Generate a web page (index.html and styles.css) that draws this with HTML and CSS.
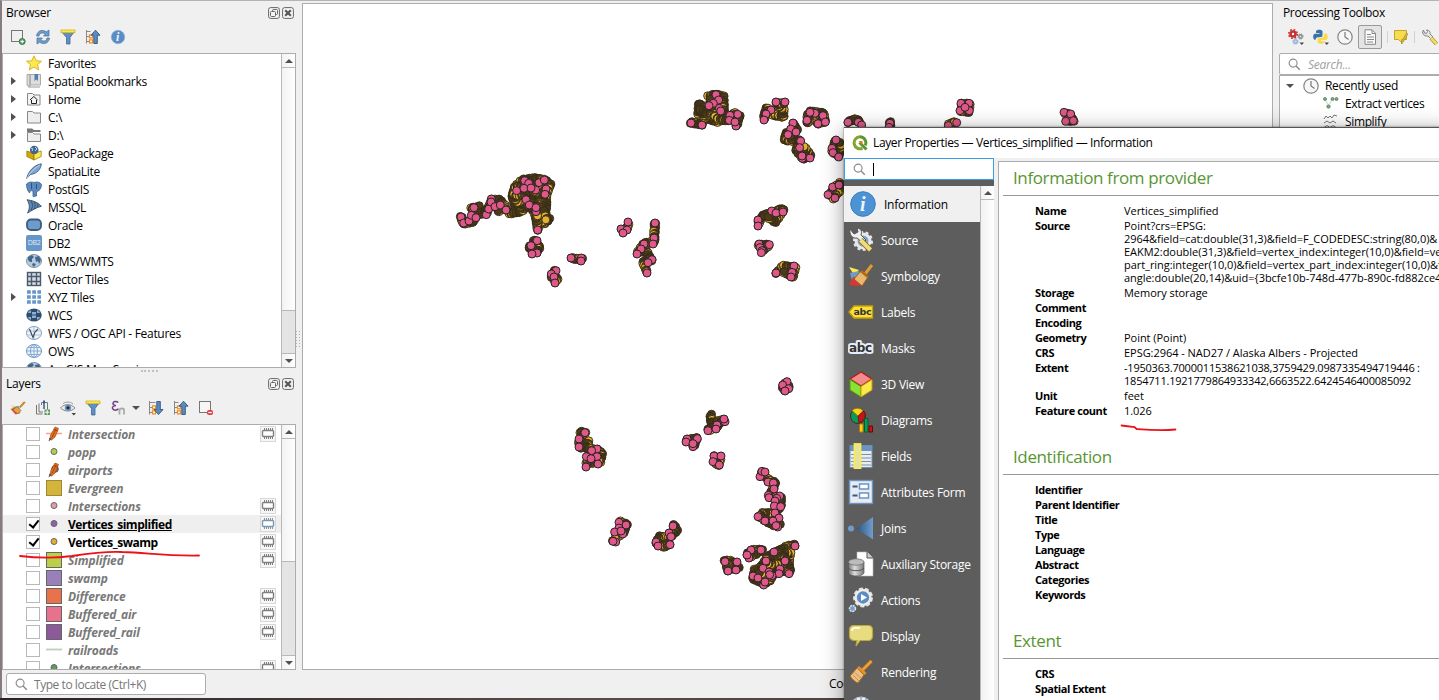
FILE: index.html
```html
<!DOCTYPE html>
<html lang="en">
<head>
<meta charset="utf-8">
<title>Layer Properties</title>
<link rel="stylesheet" href="styles.css">
</head>
<body>
<svg class="defs" width="0" height="0">
  <symbol id="float" viewBox="0 0 12 12"><rect x=".6" y=".6" width="10.8" height="10.8" rx="2" fill="#f4f4f4" stroke="#666"/><rect x="4.5" y="2.5" width="5" height="5" rx="1" fill="none" stroke="#666"/><rect x="2.5" y="4.5" width="5" height="5" rx="1" fill="#f4f4f4" stroke="#666"/></symbol>
  <symbol id="close" viewBox="0 0 12 12"><rect x=".6" y=".6" width="10.8" height="10.8" rx="2" fill="#f4f4f4" stroke="#666"/><path d="M3.2 3.2l5.6 5.6M8.8 3.2L3.2 8.8" stroke="#555" stroke-width="2.1"/></symbol>
  <symbol id="filter" viewBox="0 0 16 16"><path d="M1.5 2.5h13L10 8.5V15H6.500V8.500z" fill="#5f8fc4" stroke="#3d6a9c" stroke-width=".8"/><rect x="1" y="1" width="14" height="2.800" fill="#fce94f" stroke="#c4a000" stroke-width=".6"/></symbol>
  <symbol id="collapse" viewBox="0 0 16 16"><path d="M1.500 1v13.500M1.500 2.500h4M1.500 7.500h3M1.500 12.500h3" stroke="#888" fill="none"/><path d="M4.500 5.800h3v3h-3zM4.500 10.800h3v3h-3z" fill="#fff" stroke="#f08a1c" stroke-width="1.200"/><path d="M10.500 1.200l4.500 5h-2.700v8.300H8.800V6.200H6z" fill="#5a8cc0" stroke="#2f5580" stroke-width=".9"/></symbol>
  <symbol id="expand" viewBox="0 0 16 16"><path d="M1.500 1v13.500M1.500 2.500h6M1.500 7.500h3M1.500 12.500h3" stroke="#888" fill="none"/><path d="M4.500 5.800h3v3h-3zM4.500 10.800h3v3h-3z" fill="#fff" stroke="#f08a1c" stroke-width="1.200"/><path d="M10.500 14.500l4.500-5h-2.700V1.500H8.800v8H6z" fill="#5a8cc0" stroke="#2f5580" stroke-width=".9"/></symbol>
  <symbol id="chip" viewBox="0 0 16 16"><rect x=".5" y=".5" width="15" height="15" fill="#f6f6f6" stroke="#d8d8d8"/><rect x="2.500" y="4.500" width="11" height="6" rx="1" fill="#fff" stroke="currentColor" stroke-width="1.400"/><path d="M4.500 2v2.500M6.500 2v2.500M8.500 2v2.500M10.500 2v2.500M12.500 2v2.500M4.500 11v2M6.500 11v2M8.500 11v2M10.500 11v2M12.500 11v2" stroke="currentColor" stroke-width="1"/></symbol>
  <symbol id="lens" viewBox="0 0 14 14"><circle cx="5.500" cy="5.500" r="4.300" fill="none" stroke="#8a8a8a" stroke-width="1.200"/><path d="M8.700 8.700l4 4" stroke="#8a8a8a" stroke-width="1.600"/></symbol>
  <symbol id="clock" viewBox="0 0 16 16"><circle cx="8" cy="8" r="7.200" fill="#f7f7f7" stroke="#858585" stroke-width="1.200"/><path d="M8 3v5l3.500 2.500" fill="none" stroke="#777" stroke-width="1.200"/></symbol>
  <symbol id="pencil" viewBox="0 0 16 16"><path d="M9 1l3.500 1.500-3.500 8.500-3.500 3-1.500-1 .7-4z" fill="#e8721c" stroke="#a04a10" stroke-width=".7"/><path d="M8 3.500l4 1.500M10.200 2.500l-4.200 9" stroke="#8f3d10" stroke-width=".8"/><path d="M3.500 11.500l-1 4 3.500-2.500z" fill="#555"/></symbol>
  <symbol id="globe" viewBox="0 0 16 14"><ellipse cx="8" cy="7" rx="7.500" ry="6.500" fill="#e8f0f8" stroke="#6e97c2"/><ellipse cx="8" cy="7" rx="3.500" ry="6.500" fill="none" stroke="#7ba2cc"/><path d="M8 .5v13M.5 7h15M2 3.500h12M2 10.500h12" stroke="#7ba2cc" stroke-width=".8"/></symbol>
  <symbol id="earth" viewBox="0 0 16 14"><ellipse cx="8" cy="7" rx="7.500" ry="6.500" fill="#b7cbdf" stroke="#7d92a8"/><path d="M2 3l4-2 2 2-2 2v3L4 8 2 6zM9 3l4-1 2 4-2 4-1-3-2 1zM7 9l3 1-2 3-2-2z" fill="#42668c"/></symbol>
  <linearGradient id="joinfade"><stop offset="0" stop-color="#2c5580"/><stop offset="1" stop-color="#6f9dcc"/></linearGradient>
  <linearGradient id="drum"><stop offset="0" stop-color="#777"/><stop offset=".4" stop-color="#ddd"/><stop offset="1" stop-color="#777"/></linearGradient>
</svg>

<div class="app">
  <div class="left">
    <section class="dock browser">
      <header class="dock-title"><span>Browser</span><svg><use href="#float"/></svg><svg><use href="#close"/></svg></header>
      <div class="tools">
        <svg viewBox="0 0 16 16"><rect x="1.500" y="1.500" width="11" height="11" fill="none" stroke="#777"/><circle cx="12.200" cy="12.500" r="3" fill="#5c9a68" stroke="#3d7c4a"/><path d="M10.500 12.500h3.500M12.200 10.800v3.500" stroke="#fff"/></svg>
        <svg viewBox="0 0 16 16"><path d="M1.500 7C2 3 5 1 8.500 1.500l3 1.200L14 1v6H8.500l2-2C7 3 4.500 4 4 7z" fill="#6d9ccc" stroke="#456f9b" stroke-width=".7"/><path d="M14.500 9c-.5 4-3.500 6-7 5.500l-3-1.200L2 15V9h5.500l-2 2c3.500 2 6 1 6.500-2z" fill="#6d9ccc" stroke="#456f9b" stroke-width=".7"/></svg>
        <svg><use href="#filter"/></svg>
        <svg><use href="#collapse"/></svg>
        <svg viewBox="0 0 16 16"><circle cx="8" cy="8" r="6.700" fill="#5a8cc4" stroke="#8db0d6" stroke-width=".8"/><text x="6" y="12" class="info-i small">i</text></svg>
      </div>
      <div class="box">
        <ul class="tree">
          <li><i></i><svg viewBox="0 0 16 16"><path d="M8 .8l2.200 5 5.300.4-4 3.500 1.300 5.300L8 12l-4.800 3 1.300-5.300-4-3.500 5.300-.4z" fill="#fce94f" stroke="#cfae20" stroke-width=".9"/></svg>Favorites</li>
          <li><i class="arr"></i><svg viewBox="0 0 16 16"><path d="M1 1.500h3v12l-3-1zM4 1.500h10.500V12H4z" fill="#ddd" stroke="#999" stroke-width=".8"/><path d="M2 14h12" stroke="#999"/><path d="M8.500 1h3.500v7l-1.700-1.500L8.500 8z" fill="#4f7fb5"/></svg>Spatial Bookmarks</li>
          <li><i class="arr"></i><svg viewBox="0 0 16 16"><path d="M1.500 2.500h5l1.500 1.500h6v10h-12.500z" fill="#f4f4f4" stroke="#888"/><path d="M4 9l3.800-3.500L11.500 9M5.500 9v3.500h5V9" fill="none" stroke="#222"/></svg>Home</li>
          <li><i class="arr"></i><svg viewBox="0 0 16 16"><path d="M1.500 2.500h5l1.500 1.500h6.500v10h-13z" fill="#eee" stroke="#888"/></svg>C:\</li>
          <li><i class="arr"></i><svg viewBox="0 0 16 16"><path d="M1 1.500h5l2 1.500h6.500v2H1z" fill="#777"/><path d="M1.500 5.500h5l1.500 1.500h6.500v7.500h-13z" fill="#eee" stroke="#888"/></svg>D:\</li>
          <li><i></i><svg viewBox="0 0 16 16"><path d="M.8 6L8 8.500V15L.8 11.500z" fill="#d8a800" stroke="#8f7000" stroke-width=".7"/><path d="M15.200 6L8 8.500V15l7.200-3.500z" fill="#fce94f" stroke="#8f7000" stroke-width=".7"/><circle cx="8.200" cy="5" r="4.300" fill="#3f668f"/><path d="M5 3l2 1-1 2M9 2l2 2-2 2" stroke="#c9d8e8" fill="none"/></svg>GeoPackage</li>
          <li><i></i><svg viewBox="0 0 16 16"><path d="M.7 15.500C2 9 7 2.500 15.300.800 15 6 11.500 10.500 4.500 11.500z" fill="#7fa6d0" stroke="#3c5f84" stroke-width=".9"/><path d="M1 15.500C4 9 9 5 14 2" stroke="#dce8f3" fill="none" stroke-width=".7"/></svg>SpatiaLite</li>
          <li><i></i><svg viewBox="0 0 16 16"><path d="M.5 3C3 .5 6 .8 8 1.500c3-1 6-.5 7.500 2 0 3-1.500 6-3.500 6.500L10.500 11v4L7 15.500V10L4.500 9.500 3.500 12C1.500 10 .3 6 .5 3z" fill="#5b89bb" stroke="#3c6590" stroke-width=".8"/><path d="M5.500 2v6M10.500 3v5" stroke="#2f567e"/></svg>PostGIS</li>
          <li><i></i><svg viewBox="0 0 16 16"><path d="M1 .8c4 .5 11 2 14.300 6.500C11 8 5 12 1.500 14 4 10 4 5 1 .8z" fill="#5b89bb" stroke="#456"/><path d="M5 2c2 3 2 6 0 9M8 3c1.500 2 1.500 5 0 7M11 4.500c.8 1.500.8 2.500 0 4" stroke="#345" fill="none" stroke-width=".8"/></svg>MSSQL</li>
          <li><i></i><svg viewBox="0 0 16 16"><rect x="1" y="2.500" width="14" height="10.500" rx="4" fill="#6d9ccc" stroke="#3c5b7d" stroke-width="1.800"/></svg>Oracle</li>
          <li><i></i><b class="db2">DB2</b>DB2</li>
          <li><i></i><svg><use href="#earth"/></svg>WMS/WMTS</li>
          <li><i></i><svg viewBox="0 0 16 16"><rect x="1.500" y="1.500" width="13" height="13" fill="#cfdbe8" stroke="#4d5a68" stroke-width="1.400"/><path d="M5.500 1v14M10.500 1v14M1 5.500h14M1 10.500h14" stroke="#4d5a68" stroke-width="1.400"/></svg>Vector Tiles</li>
          <li><i class="arr"></i><svg viewBox="0 0 16 16"><path d="M1 3h14M1 8h14M1 13h14" stroke="#6796ca" stroke-width="3.600" stroke-dasharray="3.800 1.400"/></svg>XYZ Tiles</li>
          <li><i></i><svg viewBox="0 0 16 14"><ellipse cx="8" cy="7" rx="7.200" ry="6" fill="#8fb0d2" stroke="#4a6480" stroke-width="1.200"/><path d="M1 5h4v4H1zM11 5h4v4h-4zM6 1h4v3H6zM6 10h4v3H6z" fill="#2e4c6d"/><path d="M5.500 1v12M10.500 1v12M1 7h14" stroke="#2e4c6d"/></svg>WCS</li>
          <li><i></i><svg viewBox="0 0 16 14"><ellipse cx="8" cy="7" rx="7.500" ry="6.500" fill="#eef4fa" stroke="#7ba2cc"/><path d="M1 5h14M1 9h14M8 1v12" stroke="#a8c4e0"/><path d="M3.500 3L7 11.500 9 6l3-3" fill="none" stroke="#444" stroke-width="1.100"/></svg>WFS / OGC API - Features</li>
          <li><i></i><svg><use href="#globe"/></svg>OWS</li>
          <li><i></i><svg><use href="#earth"/></svg>ArcGIS Map Service</li>
        </ul>
        <div class="scroll"><em class="up"></em><span class="thumb low"></span><em class="down"></em></div>
      </div>
    </section>
    <div class="grip"></div>
    <section class="dock layers">
      <header class="dock-title"><span>Layers</span><svg><use href="#float"/></svg><svg><use href="#close"/></svg></header>
      <div class="tools">
        <svg viewBox="0 0 16 16"><path d="M1 5l6 2-3 4z" fill="#fce94f"/><path d="M.5 9l6-2 4 6-5 1.500z" fill="#e04b4b"/><path d="M3 7l6-1 1 4-4 1z" fill="#6d9ccc"/><path d="M14.800 1.800l-5 5.500" stroke="#c98420" stroke-width="2"/><path d="M7 6.500l4 4-3 3.500-5-4z" fill="#e0a24a" stroke="#9c6518" stroke-width=".6"/></svg>
        <svg viewBox="0 0 16 16"><path d="M1.500 5v9h6M4 3.500v8.500h4M6.500 5V2.500h6v7" fill="none" stroke="#777"/><path d="M9 9V2.500" stroke="#2f5f95" stroke-width="1.500"/><path d="M9 .5v3" stroke="#2f5f95" stroke-width="2"/><rect x="9.500" y="9.500" width="5.500" height="5.500" fill="#5c9a68"/><path d="M12.200 10v4.500M10 12.200h4.500" stroke="#fff"/></svg>
        <svg viewBox="0 0 16 16"><path d="M.5 8C4 3.500 11 3.500 15 8c-4 4-10.500 4-14.500 0z" fill="#e8eaec" stroke="#888"/><circle cx="8" cy="7.700" r="3.200" fill="#6d93bd"/><circle cx="8" cy="7.700" r="1.500" fill="#223"/><path d="M3 3.500C6 1.500 10 1.500 13 4" stroke="#999" fill="none"/><path d="M11.500 13h4.500l-2.200 2.500z" fill="#444"/></svg>
        <svg><use href="#filter"/></svg>
        <svg viewBox="0 0 16 16"><path d="M8.300 2.500C6 .5 3 1.500 3 3.500 3 5 4.500 5.500 6 5.500 3.500 5.500 2 7 2.500 8.500c.8 2.300 4.500 2 6 .2" fill="none" stroke="#6d4280" stroke-width="1.500"/><path d="M9.500 14.500v-4.500c0-2 4.500-2 4.500 0v4.500" fill="none" stroke="#aaa" stroke-width="1.800"/></svg>
        <i class="caret"></i>
        <svg><use href="#expand"/></svg>
        <svg><use href="#collapse"/></svg>
        <svg viewBox="0 0 16 16"><rect x="1.500" y="1.500" width="11" height="11" fill="#f6f6f6" stroke="#777"/><rect x="9" y="10" width="6" height="5" rx="1.800" fill="#e04444"/><path d="M10.200 12.500h3.600" stroke="#fff" stroke-width="1.200"/></svg>
      </div>
      <div class="box">
        <ul class="tree list">
          <li><i class="chk"></i><svg viewBox="0 0 16 16"><path d="M0 7.500h16" stroke="#f3a48d" stroke-width="1.500"/><use href="#pencil"/></svg><span>Intersection</span><svg class="chip"><use href="#chip"/></svg></li>
          <li><i class="chk"></i><svg viewBox="0 0 16 16"><circle cx="8" cy="7.500" r="3" fill="#b5cf4b" stroke="#666"/></svg><span>popp</span></li>
          <li><i class="chk"></i><svg viewBox="0 0 16 16"><circle cx="9" cy="7" r="3.300" fill="#7b6bb0" stroke="#555"/><use href="#pencil"/></svg><span>airports</span></li>
          <li><i class="chk"></i><b class="sw gold"></b><span>Evergreen</span></li>
          <li><i class="chk"></i><svg viewBox="0 0 16 16"><circle cx="8" cy="7.500" r="3" fill="#e69aa8" stroke="#666"/></svg><span>Intersections</span><svg class="chip"><use href="#chip"/></svg></li>
          <li class="on sel"><i class="chk"></i><svg viewBox="0 0 16 16"><circle cx="8" cy="7.500" r="3" fill="#8f5fa8" stroke="#666"/></svg><span>Vertices_simplified</span><svg class="chip blue"><use href="#chip"/></svg></li>
          <li class="on"><i class="chk"></i><svg viewBox="0 0 16 16"><circle cx="8" cy="7.500" r="3" fill="#e0b02f" stroke="#666"/></svg><span>Vertices_swamp</span><svg class="chip"><use href="#chip"/></svg></li>
          <li><i class="chk"></i><b class="sw lime"></b><span>Simplified</span><svg class="chip"><use href="#chip"/></svg></li>
          <li><i class="chk"></i><b class="sw violet"></b><span>swamp</span></li>
          <li><i class="chk"></i><b class="sw orange"></b><span>Difference</span><svg class="chip"><use href="#chip"/></svg></li>
          <li><i class="chk"></i><b class="sw pink"></b><span>Buffered_air</span><svg class="chip"><use href="#chip"/></svg></li>
          <li><i class="chk"></i><b class="sw purple"></b><span>Buffered_rail</span><svg class="chip"><use href="#chip"/></svg></li>
          <li><i class="chk"></i><svg viewBox="0 0 16 16"><path d="M0 7.500h16" stroke="#bcd0bc" stroke-width="1.800"/></svg><span>railroads</span></li>
          <li><i class="chk"></i><svg viewBox="0 0 16 16"><circle cx="8" cy="7.500" r="3" fill="#5f9a5f" stroke="#666"/></svg><span>Intersections</span><svg class="chip"><use href="#chip"/></svg></li>
        </ul>
        <div class="scroll"><em class="up"></em><span class="thumb mid"></span><em class="down"></em></div>
      </div>
    </section>
  </div>
  <div class="vgrip"></div>
  <main class="canvas"><svg id="map" viewBox="303 4 969 665"></svg></main>
  <aside class="toolbox">
    <header class="dock-title">Processing Toolbox</header>
    <div class="tools">
      <svg viewBox="0 0 18 16"><circle cx="6" cy="5" r="2.500" fill="#fff" stroke="#c93030" stroke-width="2.600"/><circle cx="6" cy="5" r="4.300" fill="none" stroke="#c93030" stroke-width="1.600" stroke-dasharray="1.700 1.680"/><circle cx="13.500" cy="7.500" r="1.700" fill="#ddd" stroke="#888" stroke-width="1.400"/><circle cx="13.500" cy="7.500" r="2.700" fill="none" stroke="#888" stroke-width="1" stroke-dasharray="1 1.120"/><circle cx="8.500" cy="12.500" r="1.800" fill="#ccdcf0" stroke="#9ab8e0" stroke-width="1.500"/><circle cx="8.500" cy="12.500" r="2.800" fill="none" stroke="#9ab8e0" stroke-width="1" stroke-dasharray="1 1.200"/><path d="M12.500 13.500H17L14.800 16z" fill="#444"/></svg>
      <svg viewBox="0 0 18 16"><path d="M4 4V2.500C4 0 10.500 0 10.500 2.500v4C10.500 8 9 8 5 8.500 3.500 9 3.500 11 3.500 11 .500 11 .500 5 3 4.800h4.500V4z" fill="#3b72a8"/><path d="M12 4.500h1.500c3 0 3 6.500 0 6.500H9v1h3.500c0 4-7 4-7 0V10c0-2 6.500-.500 6.500-3z" fill="#fcd94a"/><path d="M12.500 13.500H17L14.800 16z" fill="#444"/></svg>
      <svg class="sq"><use href="#clock"/></svg>
      <span class="pressed"><svg viewBox="0 0 16 16"><path d="M3 .8h7l3.500 3.500v11H3z" fill="#fafafa" stroke="#888"/><path d="M10 1v3.500h3.500M5 5.500h4M5 8h7M5 10.500h7M5 13h6" stroke="#888" fill="none"/></svg></span>
      <u></u>
      <svg class="sq" viewBox="0 0 16 16"><path d="M1.500 1.500h12v9h-5v3l-3-3h-4z" fill="#f6dc4e" stroke="#c4a82c"/><path d="M14.800 5l-5 8.500-1.300 1.500.3-2.500L13.500 4z" fill="#f6c94a" stroke="#9a7a20" stroke-width=".7"/></svg>
      <u></u>
      <svg class="sq wrench" viewBox="0 0 16 16"><path d="M1.500 1l1 3 2 .5 1-2-1-1.500c3 0 4 2 3.500 4l3 3-2 2-3-3C3 7.500.500 5.500.500 3z" fill="#e8e8e8" stroke="#777" stroke-width=".9"/><path d="M9 9l5.500 6" stroke="#9b8428" stroke-width="4"/><path d="M9 9l5.500 6" stroke="#f0dc6a" stroke-width="2.600"/></svg>
    </div>
    <div class="find"><svg><use href="#lens"/></svg>Search...</div>
    <div class="recent">
      <p><i class="caret"></i><svg><use href="#clock"/></svg>Recently used</p>
      <p class="sub"><svg viewBox="0 0 16 16"><g fill="#7cab84" stroke="#44704c" stroke-width=".7"><circle cx="2" cy="3" r="1.500"/><circle cx="9.500" cy="3" r="1.500"/><circle cx="13.500" cy="3" r="1.500"/><circle cx="5.500" cy="10.500" r="1.700"/></g><path d="M3 5l1.500 3M8.500 5L6.500 8" stroke="#ccc"/></svg>Extract vertices</p>
      <p class="sub"><svg viewBox="0 0 16 16"><path d="M1 5l2-3 2 2 2-2 2 2 2-3 3 1M1 9l3-2 3 2 3-2 3 2M1 13.500l3-2 3 2 3-2 3 2" fill="none" stroke="#777"/></svg>Simplify</p>
    </div>
  </aside>
</div>
<footer class="status"><div class="locate"><svg><use href="#lens"/></svg>Type to locate (Ctrl+K)</div><span class="coord">Coordinate</span></footer>
<div class="desk"></div>

<div class="dialog">
  <header class="caption"><svg viewBox="0 0 16 16"><path d="M8 1.800a6 6 0 1 0 2.500 11.500" fill="none" stroke="#7da52f" stroke-width="3"/><path d="M8 1.800a6 6 0 0 1 5.300 8.500" fill="none" stroke="#589632" stroke-width="3"/><path d="M7.500 7.500l7 7" stroke="#589632" stroke-width="3"/><path d="M6.500 6h4v4z" fill="#ee7913"/></svg>Layer Properties — Vertices_simplified — Information</header>
  <div class="body">
    <nav>
      <div class="query"><svg><use href="#lens"/></svg><s></s></div>
      <div class="pages">
        <ul>
          <li class="cur"><svg viewBox="0 0 26 26"><circle cx="13" cy="13" r="12.300" fill="#4c93d6" stroke="#3b7cbd"/><text x="10" y="20" class="info-i">i</text></svg>Information</li>
          <li><svg viewBox="0 0 26 26"><circle cx="15" cy="14" r="7" fill="#7fa6d0" stroke="#e8e8e8" stroke-width="3"/><circle cx="15" cy="14" r="9" fill="none" stroke="#e8e8e8" stroke-width="2" stroke-dasharray="3 2.600"/><path d="M2 2l4 5 4-2-1-4c5 1 5 4 4 7l5 5-3 3-6-5C4 12 1 7 2 2z" fill="#eee" stroke="#555"/><path d="M12.500 13l10 10" stroke="#866d20" stroke-width="6"/><path d="M12.500 13l10 10" stroke="#f0dc7a" stroke-width="4"/></svg>Source</li>
          <li><svg viewBox="0 0 26 26"><path d="M1 4l10 3-5 5z" fill="#fce94f"/><path d="M2 10l9-2 2 6-9 4z" fill="#6d9ccc"/><path d="M1 22l4-8 10 2 1 6-8 1z" fill="#d93535"/><path d="M24 2l-7 9" stroke="#e09a36" stroke-width="3"/><path d="M13 8l7 6-6 9-8-7z" fill="#e8b871" stroke="#9c6518"/><path d="M13 8l7 6" stroke="#a96a1c" stroke-width="2.500"/></svg>Symbology</li>
          <li><svg viewBox="0 0 26 26"><path d="M1 13l5-6h18.500v12H6z" fill="#fbe03c" stroke="#c6a000" stroke-width="1.300"/><text x="5.500" y="16" class="abc">abc</text></svg>Labels</li>
          <li><svg viewBox="0 0 26 26"><text x="1" y="16.500" class="abc halo">abc</text></svg>Masks</li>
          <li><svg viewBox="0 0 26 26"><path d="M13 1l11 7-11 7L2 8z" fill="#f28b8b" stroke="#b91818" stroke-width="1.200"/><path d="M2 8.500l11 7V26L2 19z" fill="#8ae234" stroke="#4e9a06"/><path d="M24 8.500l-11 7V26l11-7z" fill="#fce94f" stroke="#c4a000"/></svg>3D View</li>
          <li><svg viewBox="0 0 26 26"><circle cx="10" cy="9" r="7.500" fill="#0b9a55" stroke="#333"/><path d="M10 9L4 3.500a8 8 0 0 1 11 0z" fill="#fcd116" stroke="#a07a00" stroke-width=".7"/><path d="M10 9l6-5c2.500 4 1 10-5 12z" fill="#c4151c" stroke="#7c0000" stroke-width=".7"/><path d="M11.500 17h3.500v8h-3.500z" fill="#fcd116" stroke="#b37b00"/><path d="M16.500 11.500h3.500V25h-3.500z" fill="#0b9a55" stroke="#055c30"/><path d="M21 19h3.500v6H21z" fill="#c4151c" stroke="#700"/></svg>Diagrams</li>
          <li><svg viewBox="0 0 26 26"><rect x="2" y="2.500" width="22" height="22" fill="#e8edf2" stroke="#6d8fb4"/><path d="M2 3h22v5H2z" fill="#6a94c2"/><path d="M3 11.500h20M3 15h20M3 18.500h20M3 22h20" stroke="#7c8fa4" stroke-width="1.200"/><rect x="6.500" y="1" width="6" height="25" fill="#e8e0a0" stroke="#f5ee50" stroke-width="1.800"/></svg>Fields</li>
          <li><svg viewBox="0 0 26 26"><rect x="1.500" y="1.500" width="23" height="23" fill="#e8ecf0" stroke="#6a94c2" stroke-width="1.400"/><g fill="#fff" stroke="#6a94c2" stroke-width="1.500"><rect x="11.500" y="5" width="9" height="5"/><rect x="11.500" y="14" width="9" height="5"/></g><path d="M4.500 7.500h5M4.500 16.500h5" stroke="#345b85" stroke-width="1.800"/></svg>Attributes Form</li>
          <li><svg viewBox="0 0 26 26"><circle cx="3" cy="13.500" r="3" fill="#6d9ccc"/><path d="M8 13.500L25 2v22.500z" fill="url(#joinfade)"/></svg>Joins</li>
          <li><svg viewBox="0 0 26 26"><path d="M9 1h10l6 6v18H9z" fill="#fff" stroke="#bbb" stroke-width=".6"/><path d="M19 1v6h6" fill="#ccc" stroke="#555"/><path d="M.5 11v11c1 4 14 4 15.500 0V11z" fill="url(#drum)" stroke="#555" stroke-width=".7"/><ellipse cx="8.200" cy="11" rx="7.800" ry="3.200" fill="#bbb" stroke="#666" stroke-width=".7"/><path d="M.5 17c1 3.500 14 3.500 15.500 0" fill="none" stroke="#555"/></svg>Auxiliary Storage</li>
          <li><svg viewBox="0 0 26 26"><circle cx="15" cy="10.500" r="8.700" fill="none" stroke="#e4e4e4" stroke-width="2.500" stroke-dasharray="4 2.100"/><circle cx="15" cy="10.500" r="7.400" fill="#5b8dc2" stroke="#ececec" stroke-width="2.500"/><path d="M13 7l6 3.500-6 3.500z" fill="#fff"/><circle cx="4.500" cy="21.500" r="3" fill="#6fa0d4" stroke="#e4e4e4" stroke-width="1.500" stroke-dasharray="2 .8"/></svg>Actions</li>
          <li><svg viewBox="0 0 26 26"><path d="M6 2.500h14q4.500 0 4.500 4.500v6q0 4.500-4.500 4.500h-8L8 23l1-5.500H6Q1.500 17 1.500 13V7Q1.500 2.500 6 2.500z" fill="#e8dc80" stroke="#bca93c" stroke-width="1.200"/><path d="M4 8q0-3 3-3h5" stroke="#fff" fill="none" stroke-width="1.500"/></svg>Display</li>
          <li><svg viewBox="0 0 26 26"><path d="M23.500 2l-9 9" stroke="#a86717" stroke-width="4"/><path d="M23.500 2l-9 9" stroke="#e8a242" stroke-width="2.500"/><path d="M9 9l7 7-6 8c-3-1-6-4-8-7z" fill="#eabf85" stroke="#a86717"/><path d="M10 8l7.500 7" stroke="#e09030" stroke-width="3"/><path d="M5 16l6 6M7 13.500l6 6" stroke="#b98544" stroke-width=".8"/></svg>Rendering</li>
          <li><svg viewBox="0 0 26 26"><circle cx="13" cy="13" r="11" fill="#f2f2f2" stroke="#ccc"/><path d="M8 3v10M13 2v10M18 3v10" stroke="#8ba4c0" stroke-width="1.500"/></svg></li>
        </ul>
        <div class="scroll"><em class="up"></em></div>
      </div>
    </nav>
    <article>
      <h2>Information from provider</h2>
      <dl>
        <dt>Name</dt><dd>Vertices_simplified</dd>
        <dt>Source</dt><dd>Point?crs=EPSG:<br>2964&amp;field=cat:double(31,3)&amp;field=F_CODEDESC:string(80,0)&amp;<br>EAKM2:double(31,3)&amp;field=vertex_index:integer(10,0)&amp;field=ve<br>part_ring:integer(10,0)&amp;field=vertex_part_index:integer(10,0)&amp;f<br>angle:double(20,14)&amp;uid={3bcfe10b-748d-477b-890c-fd882ce4</dd>
        <dt>Storage</dt><dd>Memory storage</dd>
        <dt>Comment</dt><dd></dd>
        <dt>Encoding</dt><dd></dd>
        <dt>Geometry</dt><dd>Point (Point)</dd>
        <dt>CRS</dt><dd>EPSG:2964 - NAD27 / Alaska Albers - Projected</dd>
        <dt>Extent</dt><dd class="num">-1950363.7000011538621038,3759429.0987335494719446 :<br>1854711.1921779864933342,6663522.6424546400085092</dd>
        <dt>Unit</dt><dd>feet</dd>
        <dt>Feature count</dt><dd>1.026</dd>
      </dl>
      <h2>Identification</h2>
      <dl><dt>Identifier</dt><dt>Parent Identifier</dt><dt>Title</dt><dt>Type</dt><dt>Language</dt><dt>Abstract</dt><dt>Categories</dt><dt>Keywords</dt></dl>
      <h2>Extent</h2>
      <dl><dt>CRS</dt><dt>Spatial Extent</dt></dl>
    </article>
  </div>
</div>

<svg class="ink" viewBox="0 0 1439 700"><path d="M20 556c18 2 36 2 52 0 20-3 34-5 50-4 28 1 40 4 77 3.500M1121.500 425.500l13 1.500 2 2c14 1 24 1.800 39 .5"/></svg>
<script src="map.js"></script>
</body>
</html>
```
FILE: styles.css
```css
* { box-sizing: border-box; }
body { margin: 0; width: 1439px; height: 700px; overflow: hidden; background: #f0f0f0; color: #000; font: 12px/18px "Open Sans", "Noto Sans", sans-serif; letter-spacing: -0.25px; position: relative; display: flex; flex-direction: column; }
ul, p, h2, dl, dd { margin: 0; padding: 0; list-style: none; }
svg { display: block; flex: none; overflow: hidden; }
.defs { position: absolute; }
.app { display: flex; height: 670px; border-top: 1px solid #b4b4b4; border-left: 2px solid #857b80; }
.left { width: 294px; flex: none; }
.dock-title { display: flex; align-items: center; gap: 2px; height: 22px; padding: 2px 2px 0 4px; }
.dock-title span { flex: 1; }
.dock-title svg { width: 12px; height: 12px; }
.tools { display: flex; align-items: center; gap: 9px; height: 30px; padding: 0 0 2px 8px; }
.tools svg { width: 16px; height: 16px; }
.box { display: flex; border: 1px solid #acacac; background: #fff; overflow: hidden; }
.browser .box { height: 315px; }
.grip { height: 6px; margin: 0 139px 0 139px; border-top: 2px dotted #c0c0c0; transform: translateY(2px); width: 17px; }
.layers .dock-title { height: 20px; padding-top: 0; }
.layers .tools { height: 30px; }
.layers .box { height: 246px; }
.tree { flex: 1; min-width: 0; }
.tree li { display: flex; align-items: center; height: 18px; padding-top: 2px; white-space: nowrap; letter-spacing: -0.3px; }
.tree li > svg { width: 16px; height: 16px; margin: -2px 6px 0 0; }
.tree i { width: 23px; flex: none; }
.arr::before { content: ""; display: block; margin: -2px 0 0 8px; width: 0; border: 4px solid transparent; border-left: 5px solid #505050; border-right: 0; }
.db2 { width: 16px; height: 16px; margin: -2px 6px 0 0; background: #6796ca; border-radius: 2px; color: #e3edf8; font: 7px/16px "Open Sans", sans-serif; text-align: center; }
.scroll { width: 14px; flex: none; border-left: 1px solid #b8b8b8; background: linear-gradient(90deg, #f2f2f2, #fff); display: flex; flex-direction: column; }
.scroll em { height: 14px; display: flex; align-items: center; justify-content: center; flex: none; }
.scroll em::before { content: ""; border: 4px solid transparent; }
.up { border-bottom: 1px solid #b8b8b8; }
.up::before { border-top: 0 !important; border-bottom-color: #505050 !important; }
.down { border-top: 1px solid #b8b8b8; }
.down::before { border-bottom: 0 !important; border-top-color: #505050 !important; }
.thumb { background: #e4e4e4; border-top: 1px solid #b8b8b8; }
.low { margin-top: 242px; height: 43px; }
.mid { margin-top: 122px; height: 94px; }
.list li { color: #787878; font: italic bold 12px/18px "Open Sans", sans-serif; letter-spacing: -0.12px; padding-right: 5px; }
.list li span { flex: 1; }
.list li > .chip { color: #808080; margin: -2px 0 0; }
.list li > .blue { color: #7f96ab; }
.list .on { color: #000; font-style: normal; letter-spacing: -0.47px; }
.list .sel { background: #efefef; }
.sel span { text-decoration: underline; }
.list .chk { width: 14px; height: 14px; margin: -2px 6px 0 23px; border: 1px solid #b8b8b8; background: #fff; }
.on .chk::before { content: ""; display: block; width: 4px; height: 8px; margin: 0 0 0 4px; border: solid #000; border-width: 0 2px 2px 0; transform: rotate(38deg); }
.sw { width: 16px; height: 16px; margin: -2px 6px 0 0; border: 1px solid #666; }
.gold { background: #d3b53d; border-color: #a08830; }
.lime { background: #bccf4b; }
.violet { background: #9a80b8; }
.orange { background: #e8734a; }
.pink { background: #e8718d; }
.purple { background: #8d5a99; }
.vgrip { width: 6px; flex: none; align-self: flex-start; height: 17px; margin-top: 329px; background: radial-gradient(circle, #b0b0b0 0.7px, transparent 1px) 2px 0 / 3px 3px; }
.canvas { width: 971px; height: 667px; margin-top: 2px; flex: none; background: #fff; border: 1px solid #acacac; }
.canvas svg { width: 969px; height: 665px; }
.pt { fill: #df5888; stroke: #2a2326; stroke-width: 1; }
.swamp { fill: #4a3b19; stroke: #352a18; stroke-width: .9; }
.lit { fill: #e6b32f; }
.toolbox { width: 166px; flex: none; padding-left: 6px; overflow: hidden; }
.toolbox .dock-title { letter-spacing: -0.35px; }
.toolbox .tools { gap: 7px; padding: 0 0 3px 8px; height: 31px; width: 200px; }
.toolbox .tools svg { width: 18px; }
.toolbox .tools .sq { width: 16px; }
.toolbox .tools .wrench { margin-left: 2px; }
.toolbox .tools .pressed svg { width: 16px; }
.pressed { width: 24px; height: 24px; margin-left: -2px; border: 1px solid #9a9a9a; border-radius: 2px; background: #e4e4e4; display: flex; align-items: center; justify-content: center; }
.tools u { width: 1px; height: 12px; background: #d0d0d0; margin: 0 -2px; }
.find { display: flex; align-items: center; gap: 7px; height: 22px; border: 1px solid #acacac; border-radius: 2px; background: #fff; padding: 1px 0 0 8px; color: #a0a0a0; font-style: italic; width: 180px; margin-top: -1px; font-size: 12px; }
.find svg { width: 13px; height: 13px; margin-top: -1px; }
.recent { border: 1px solid #acacac; background: #fff; height: 600px; width: 180px; padding-top: 1px; }
.recent p { display: flex; align-items: center; height: 18px; padding-left: 6px; white-space: nowrap; letter-spacing: -0.36px; }
.recent svg { width: 16px; height: 16px; margin: 0 6px 0 9px; }
.recent .sub { padding-left: 34px; }
.caret { border: 4px solid transparent; border-top-color: #505050; border-bottom: 0; }
.layers .caret { margin: 0 -1px 0 -3px; }
.status { display: flex; align-items: center; height: 28px; padding-left: 4px; border-left: 2px solid #857b80; }
.locate { display: flex; align-items: center; gap: 6px; width: 200px; height: 22px; border: 1px solid #acacac; border-radius: 3px; background: #fff; color: #777; padding: 1px 0 0 8px; letter-spacing: -0.5px; }
.locate { letter-spacing: -0.45px; }
.locate svg { width: 13px; height: 13px; margin-top: -1px; }
.coord { margin-left: 623px; }
.desk { flex: 1; background: linear-gradient(90deg, #2a2226, #5a4b48 40%, #3c3030); }
.dialog { position: absolute; left: 844px; top: 127px; width: 610px; height: 590px; border-top: 1px solid #555; background: #f0f0f0; box-shadow: 0 4px 20px rgba(0, 0, 0, .42), 0 0 2px rgba(0, 0, 0, .5); }
.caption { display: flex; align-items: center; gap: 5px; height: 30px; padding-left: 8px; background: #fff; letter-spacing: -0.37px; }
.caption svg { width: 16px; height: 16px; }
.body { display: flex; height: 560px; }
nav { width: 150px; background: #5d5d5d; flex: none; }
.query { display: flex; align-items: center; height: 22px; border: 1px solid #3d9ce6; background: #fff; padding-left: 8px; gap: 7px; }
.query svg { width: 13px; height: 13px; }
.query s { width: 1px; height: 13px; background: #000; }
.pages { display: flex; margin-top: 6px; }
.pages ul { width: 136px; overflow: hidden; height: 540px; }
.pages li { display: flex; align-items: center; gap: 6px; height: 36px; padding: 2px 0 0 5px; color: #fff; white-space: nowrap; }
.pages .cur { background: #f0f0f0; color: #000; gap: 7px; padding-left: 7px; }
.pages svg { width: 26px; height: 26px; margin: -2px 1px 0 -1px; }
.info-i { font: italic bold 20px "Liberation Serif", serif; fill: #eef4fb; }
.small { font-size: 12px; }
.abc { font: bold 9.500px "DejaVu Sans", sans-serif; fill: #333; letter-spacing: -0.4px; }
.halo { font-size: 12px; stroke: #e8ecfa; stroke-width: 4px; paint-order: stroke; stroke-linejoin: round; }
article { flex: 1; margin: 3px 0 0 4px; padding: 0 0 0 4px; background: #fff; border: 1px solid #acacac; white-space: nowrap; overflow: hidden; }
h2 { height: 34px; margin-top: 22px; padding-left: 10px; font: 17px/34px "Open Sans", sans-serif; letter-spacing: -0.38px; color: #589632; }
h2:first-child { height: 33px; margin-top: 0; line-height: 31px; }
dl { border-top: 1px solid #999; padding: 7px 0 0 32px; display: grid; grid-template-columns: 89px auto; font: 11px/13px "Open Sans", sans-serif; letter-spacing: -0.04px; }
dt, dd { padding: 1px 0; min-height: 15px; }
dt { grid-column: 1; font-weight: bold; letter-spacing: -0.42px; }
.num { letter-spacing: -0.22px; }
.ink { position: absolute; left: 0; top: 0; width: 1439px; height: 700px; pointer-events: none; fill: none; stroke: #f01018; stroke-width: 1.800; stroke-linecap: round; }
```
FILE: map.js
```js
// Each cluster set: origin of its sheet, trails of swamp vertices, and simplified vertices.
// Sheet units are thirds of a pixel.
const sheets = [
  { x: 440, y: 80,
    trails: ["751,127 785,133 790,110 775,100 778,72 800,85 830,75", "805,50 828,44 850,50 852,110 830,125 800,115 780,90 820,90 840,105 810,60", "800,100 845,120 865,120", "866,120 885,100 898,110 890,135",
      "972,115 980,85 1000,105 1030,110 1030,90 1010,70 1030,70", "1110,95 1150,100 1155,125 1134,130 1120,110 1103,128 1103,105", "1060,130 1070,150 1040,160 1035,180 1060,182 1050,165", "1080,180 1070,210 1090,235 1110,225 1090,200",
      "1187,182 1178,215 1196,225 1202,190", "1170,345 1185,320 1200,310 1196,335 1180,355",
      "63,410 70,430 100,425 110,400 95,385 115,380", "110,405 140,395 155,360 180,360 195,380 175,395", "195,385 210,400 240,395 260,380 225,375 218,350 225,320 250,300 280,295 315,300 330,315 318,345 318,390", "327,418 310,430 290,415 285,400 265,370 230,365 220,345 240,345 300,350 310,370 280,380 315,395 320,420", "230,320 300,315 250,335 310,330", "293,450 290,410",
      "282,480 298,500 290,515 268,500 280,515", "395,535 425,538", "345,570 335,590 352,595 345,605", "565,432 562,445", "645,430 642,485 615,490 595,515 620,515 635,540 610,545 620,575",
      "955,430 970,405 1000,400 1020,388 1030,390 1005,425 985,410", "957,495 985,495 970,510", "1008,580 1030,558 1045,560 1065,565 1058,590 1030,575"],
    points: "753,129 786,135 828,44 836,60 820,70 807,77 838,85 842,93 893,103 870,106 868,121 888,138 885,126 1008,66 1035,66 993,90 978,102 972,120 1125,100 1110,97 1149,107 1101,121 1134,131 1156,126 1059,129 1052,147 1044,164 1068,156 1082,183 1079,203 1087,235 1086,228 1110,234 1188,180 1176,205 1179,218 1196,231 1178,321 1197,315 1164,344 1185,354 63,411 71,429 87,423 94,406 108,413 102,383 139,404 146,387 154,357 153,366 165,380 181,375 198,390 230,332 254,302 266,310 252,325 287,330 273,324 297,308 313,300 318,327 315,343 258,359 268,375 288,395 288,383 293,450 291,482 273,497 291,519 276,522 393,534 424,534 423,543 348,572 334,582 342,591 345,609 564,426 543,447 561,450 549,459 645,429 642,474 639,492 612,492 603,507 591,522 636,539 624,548 621,579 995,393 1008,399 1029,396 954,420 954,438 957,492 988,494 960,503 966,512 964,518 1062,558 1008,579 1056,577 1053,591" },
  { x: 560, y: 370,
    trails: ["60,185 75,190 57,220 62,232 85,215 80,235 110,240 125,250 120,275 80,280 95,255", "452,135 455,160 490,150 470,170 445,180", "380,210 410,205 400,230", "462,258 480,270 475,285 462,275", "676,40 686,50 675,60 668,48",
      "605,305 620,325 645,340 630,380 662,385 662,405 645,430 610,430 600,440 640,465 660,460", "180,455 200,465 190,485 160,510", "340,465 350,480 325,505 300,500 290,520 315,530 330,520", "560,555 580,540 605,540 570,560", "495,570 515,575 535,590 505,600 500,585",
      "705,525 680,530 650,545 620,565 600,595 585,600 580,625 610,640 630,630 650,600 690,605 685,580 690,550 660,550 640,580 630,600 660,590 600,610", "640,560 670,560 680,575 650,585 620,580"],
    points: "681,35 668,45 686,56 675,63 75,188 57,207 57,231 111,237 95,242 79,260 111,260 93,266 78,291 114,282 495,155 492,147 471,165 444,182 468,177 381,207 412,206 378,216 399,230 399,221 462,258 483,258 459,275 478,285 600,320 606,304 615,306 624,336 640,339 642,357 625,376 627,383 659,378 650,385 645,393 643,408 662,410 645,429 594,440 615,453 657,444 639,453 653,471 648,467 177,457 198,465 177,474 164,486 188,492 183,483 167,516 159,514 339,468 327,489 333,500 288,516 294,528 330,524 603,540 573,540 567,564 561,555 495,575 531,576 504,603 528,600 705,528 642,546 618,573 675,573 609,595 660,597 627,606 687,611 657,611 579,618 636,617 594,624 629,614 611,645 615,636" },
  { x: 840, y: 90,
    trails: ["24,95 45,88 60,95", "150,95 150,110", "325,105 345,95", "362,42 388,42 385,65 362,62", "675,70 690,75 700,92 680,92"],
    points: "24,97 55,97 65,105 150,100 147,112 350,98 325,107 363,40 387,40 360,62 388,62 375,52 672,67 692,72 700,92 677,94" }
];
const NS = "http://www.w3.org/2000/svg";
const map = document.getElementById("map");
const pairs = s => s.split(" ").map(p => p.split(",").map(Number));
function dot(cx, cy, cls) {
  const c = document.createElementNS(NS, "circle");
  c.setAttribute("cx", cx.toFixed(2));
  c.setAttribute("cy", cy.toFixed(2));
  c.setAttribute("r", 4);
  c.setAttribute("class", cls);
  map.appendChild(c);
}
for (const s of sheets) {
  let n = 0;
  for (const t of s.trails) {
    const v = pairs(t);
    for (let i = 1; i < v.length; i++) {
      const [ax, ay] = v[i - 1], [bx, by] = v[i];
      const steps = Math.max(1, Math.round(Math.hypot(bx - ax, by - ay) / 3.2));
      for (let k = 0; k <= steps; k++, n++) {
        const f = k / steps;
        dot(s.x + (ax + (bx - ax) * f) / 3 + Math.sin(n * 2.3) * .9, s.y + (ay + (by - ay) * f) / 3 + Math.cos(n * 3.7) * .9, n % 3 ? "swamp" : "swamp lit");
      }
    }
  }
  for (const [x, y] of pairs(s.points)) dot(s.x + x / 3, s.y + y / 3, "pt");
}
```
